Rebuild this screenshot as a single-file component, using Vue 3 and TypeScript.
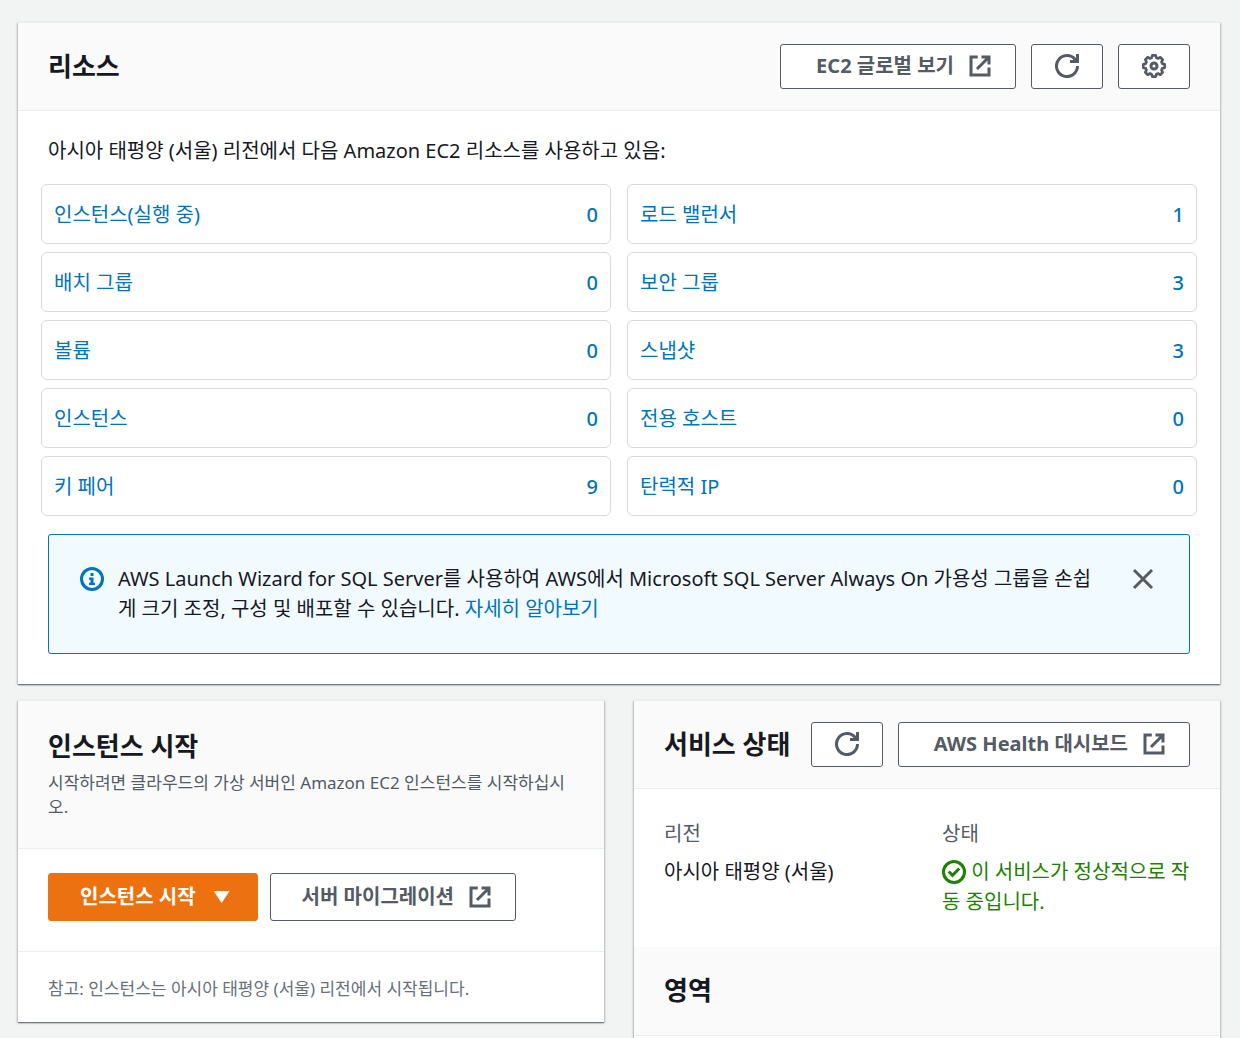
<script setup lang="ts">
interface Resource {
  label: string
  count: number
}

const resources: Resource[] = [
  { label: '인스턴스(실행 중)', count: 0 },
  { label: '로드 밸런서', count: 1 },
  { label: '배치 그룹', count: 0 },
  { label: '보안 그룹', count: 3 },
  { label: '볼륨', count: 0 },
  { label: '스냅샷', count: 3 },
  { label: '인스턴스', count: 0 },
  { label: '전용 호스트', count: 0 },
  { label: '키 페어', count: 9 },
  { label: '탄력적 IP', count: 0 },
]
</script>

<template>
  <main class="page">
    <section class="card">
      <header class="card-header">
        <h2>리소스</h2>
        <div class="actions">
          <a class="btn btn-wide" href="#">
            EC2 글로벌 보기
            <svg class="icon" viewBox="0 0 16 16" aria-hidden="true">
              <path d="M14 9v5H2V2h4.500M9 2h5v5M6 10l8-8" />
            </svg>
          </a>
          <button class="btn btn-icon" type="button" aria-label="새로 고침">
            <svg class="icon" viewBox="0 0 16 16" aria-hidden="true">
              <path d="M15 8a7 7 0 1 1-1.500-4.300L15 5M15 0v5h-5" />
            </svg>
          </button>
          <button class="btn btn-icon" type="button" aria-label="설정">
            <svg class="icon" viewBox="0 0 16 16" aria-hidden="true">
              <path
                class="gear"
                d="M6.900 0.900H9.100L9.600 2.500L10.700 2.950L12.200 2.200L13.800 3.800L13.050 5.300L13.500 6.400L15.100 6.900V9.100L13.500 9.600L13.050 10.700L13.800 12.200L12.200 13.800L10.700 13.050L9.600 13.500L9.100 15.100H6.900L6.400 13.500L5.300 13.050L3.800 13.800L2.200 12.200L2.950 10.700L2.500 9.600L0.900 9.100V6.900L2.500 6.400L2.950 5.300L2.200 3.800L3.800 2.200L5.300 2.950L6.400 2.500Z"
              />
              <circle cx="8" cy="8" r="2" />
            </svg>
          </button>
        </div>
      </header>
      <div class="resources-body">
        <p class="intro">아시아 태평양 (서울) 리전에서 다음 Amazon EC2 리소스를 사용하고 있음:</p>
        <ul class="resource-grid">
          <li v-for="item in resources" :key="item.label">
            <a class="resource" href="#">
              <span>{{ item.label }}</span>
              <span class="count">{{ item.count }}</span>
            </a>
          </li>
        </ul>
        <div class="alert" role="status">
          <svg class="icon info" viewBox="0 0 16 16" aria-hidden="true">
            <circle cx="8" cy="8" r="7" />
            <path class="solid" d="M7 4h2v2H7zM6 7h3v3.500h1V12H6v-1.500h1V8.500H6z" />
          </svg>
          <p>
            AWS Launch Wizard for SQL Server를 사용하여 AWS에서 Microsoft SQL Server Always On 가용성 그룹을 손쉽게 크기 조정, 구성 및 배포할 수 있습니다.
            <a href="#">자세히 알아보기</a>
          </p>
          <button class="close" type="button" aria-label="닫기">
            <svg class="icon" viewBox="0 0 16 16" aria-hidden="true">
              <path d="M2 2l12 12M14 2L2 14" />
            </svg>
          </button>
        </div>
      </div>
    </section>

    <div class="columns">
      <section class="card launch">
        <header class="launch-header">
          <h2>인스턴스 시작</h2>
          <p>시작하려면 클라우드의 가상 서버인 Amazon EC2 인스턴스를 시작하십시오.</p>
        </header>
        <div class="launch-actions">
          <button class="btn btn-tall primary" type="button">
            인스턴스 시작
            <svg class="icon" viewBox="0 0 16 16" aria-hidden="true">
              <path class="solid" d="M2.500 4h10.500L7.750 12z" />
            </svg>
          </button>
          <a class="btn btn-tall" href="#">
            서버 마이그레이션
            <svg class="icon" viewBox="0 0 16 16" aria-hidden="true">
              <path d="M14 9v5H2V2h4.500M9 2h5v5M6 10l8-8" />
            </svg>
          </a>
        </div>
        <footer class="launch-note">참고: 인스턴스는 아시아 태평양 (서울) 리전에서 시작됩니다.</footer>
      </section>

      <section class="card">
        <header class="card-header">
          <h2>서비스 상태</h2>
          <div class="actions">
            <button class="btn btn-icon" type="button" aria-label="새로 고침">
              <svg class="icon" viewBox="0 0 16 16" aria-hidden="true">
                <path d="M15 8a7 7 0 1 1-1.500-4.300L15 5M15 0v5h-5" />
              </svg>
            </button>
            <a class="btn btn-wide" href="#">
              AWS Health 대시보드
              <svg class="icon" viewBox="0 0 16 16" aria-hidden="true">
                <path d="M14 9v5H2V2h4.500M9 2h5v5M6 10l8-8" />
              </svg>
            </a>
          </div>
        </header>
        <dl class="health">
          <div>
            <dt>리전</dt>
            <dd>아시아 태평양 (서울)</dd>
          </div>
          <div>
            <dt>상태</dt>
            <dd class="ok">
              <svg class="icon" viewBox="0 0 16 16" aria-hidden="true">
                <circle cx="8" cy="8" r="7" />
                <path d="M4.500 7.700L7 10.200 11.500 5.700" />
              </svg>
              이 서비스가 정상적으로 작동 중입니다.
            </dd>
          </div>
        </dl>
        <header class="card-header zone-header">
          <h2>영역</h2>
        </header>
      </section>
    </div>
  </main>
</template>

<style>
body {
  margin: 0;
  background: #f2f3f3;
}
</style>

<style scoped>
.page {
  box-sizing: border-box;
  min-height: 100vh;
  display: flex;
  flex-direction: column;
  gap: 16px;
  padding: 22px 20px 0 18px;
  font-family: "Noto Sans", "Noto Sans CJK KR", sans-serif;
  font-size: 20px;
  line-height: 30px;
  color: #16191f;
}

h2,
p,
ul,
dl,
dd {
  margin: 0;
  padding: 0;
}

h2 {
  font-size: 26px;
  line-height: 36px;
  font-weight: 700;
  white-space: nowrap;
}

a {
  color: #0073bb;
  text-decoration: none;
}

.card {
  background: #fff;
  border-top: 1px solid #eaeded;
  box-shadow:
    0 1px 1px 0 rgba(0, 28, 36, 0.4),
    1px 1px 2px 0 rgba(0, 28, 36, 0.2),
    -1px 1px 2px 0 rgba(0, 28, 36, 0.2);
}

.card-header {
  display: flex;
  align-items: center;
  justify-content: space-between;
  padding: 21px 30px;
  background: #fafafa;
  border-bottom: 1px solid #eaeded;
}

.card-header h2 {
  padding-bottom: 2px;
}

.actions {
  display: flex;
  gap: 15px;
}

.btn {
  box-sizing: border-box;
  height: 45px;
  display: inline-flex;
  align-items: center;
  gap: 14px;
  padding: 0 23px 2px 31px;
  border: 1px solid #545b64;
  border-radius: 3px;
  background: #fff;
  color: #545b64;
  font: inherit;
  font-weight: 700;
  white-space: nowrap;
  cursor: pointer;
}

.btn-wide {
  padding-left: 35px;
}

.btn-icon {
  width: 72px;
  padding: 0 0 2px;
  justify-content: center;
}

.btn-tall {
  height: 48px;
  padding-bottom: 0;
}

.primary {
  background: #ec7211;
  border-color: #ec7211;
  color: #fff;
}

.icon {
  flex: none;
  width: 24px;
  height: 24px;
  fill: none;
  stroke: currentColor;
  stroke-width: 2;
}

.icon .solid {
  fill: currentColor;
  stroke: none;
}

.icon .gear {
  stroke-width: 1.800;
  stroke-linejoin: round;
}

.resources-body {
  padding: 25px 30px 30px;
}

.resource-grid {
  display: grid;
  grid-template-columns: 1fr 1fr;
  gap: 8px 16px;
  margin: 18px -7px;
  list-style: none;
}

.resource {
  box-sizing: border-box;
  height: 60px;
  display: flex;
  align-items: center;
  justify-content: space-between;
  padding: 2px 12px 0;
  border: 1px solid #d5dbdb;
  border-radius: 6px;
}

.count {
  font-weight: 500;
}

.alert {
  display: flex;
  align-items: flex-start;
  padding: 29px 34px 29px 31px;
  border: 1px solid #0073bb;
  border-radius: 3px;
  background: #f1faff;
}

.alert p {
  flex: 1;
  margin: 0 26px 0 14px;
}

.info {
  margin-top: 3px;
  color: #0073bb;
}

.close {
  display: flex;
  margin-top: 3px;
  padding: 0;
  border: 0;
  background: none;
  color: #545b64;
  cursor: pointer;
}

.columns {
  flex: 1;
  display: grid;
  grid-template-columns: 1fr 1fr;
  gap: 30px;
}

.launch {
  align-self: start;
}

.launch-header {
  padding: 27px 30px 29px;
  background: #fafafa;
  border-bottom: 1px solid #eaeded;
}

.launch-header p {
  margin-top: 7px;
  font-size: 17px;
  line-height: 24px;
  color: #545b64;
}

.launch-actions {
  display: flex;
  gap: 12px;
  padding: 24px 30px 30px;
  border-bottom: 1px solid #eaeded;
}

.launch-note {
  padding: 25px 30px 21px;
  font-size: 17px;
  line-height: 24px;
  color: #687078;
}

.health {
  display: grid;
  grid-template-columns: 1fr 1fr;
  gap: 30px;
  padding: 30px;
}

.health dt {
  margin-bottom: 8px;
  color: #545b64;
}

.ok {
  color: #1d8102;
}

.ok .icon {
  vertical-align: -5px;
}

.zone-header {
  padding: 25px 30px;
}
</style>
